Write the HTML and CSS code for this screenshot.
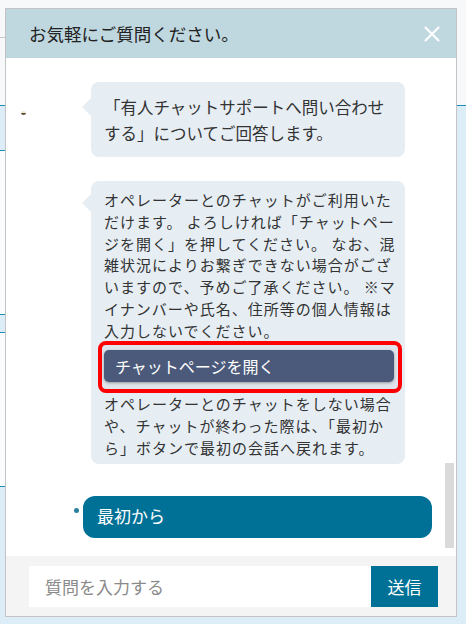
FILE: index.html
```html
<!DOCTYPE html>
<html lang="ja">
<head>
<meta charset="utf-8">
<title>チャット</title>
<link rel="stylesheet" href="styles.css">
</head>
<body>
<div class="panel">
  <header class="panel-head">
    <h1 class="panel-title">お気軽にご質問ください。</h1>
    <button class="close-btn" aria-label="閉じる">
      <svg width="16" height="16" viewBox="0 0 16 16"><path d="M1 1 L15 15 M15 1 L1 15" stroke="#fff" stroke-width="2.2" fill="none"/></svg>
    </button>
  </header>
  <div class="panel-body">
    <div class="log">
      <div class="msg-row">
        <span class="avatar"></span>
        <div class="bubble bubble-intro">「有人チャットサポートへ問い合わせ<br>する」についてご回答します。</div>
      </div>
      <div class="msg-row">
        <span class="avatar avatar-none"></span>
        <div class="bubble bubble-long">
          <p class="bubble-text">オペレーターとのチャットがご利用いた<br>だけます。 よろしければ「チャットペー<br>ジを開く」を押してください。 なお、混<br>雑状況によりお繋ぎできない場合がござ<br>いますので、予めご了承ください。 ※マ<br>イナンバーや氏名、住所等の個人情報は<br>入力しないでください。</p>
          <div class="highlight">
            <button class="open-btn">チャットページを開く</button>
          </div>
          <p class="bubble-text">オペレーターとのチャットをしない場合<br>や、チャットが終わった際は、「最初か<br>ら」ボタンで最初の会話へ戻れます。</p>
        </div>
      </div>
      <div class="user-row">
        <span class="user-dot"></span>
        <div class="user-btn">最初から</div>
      </div>
    </div>
    <div class="scroll-track"><div class="scroll-thumb"></div></div>
  </div>
  <footer class="panel-foot">
    <div class="input">質問を入力する</div>
    <button class="send-btn">送信</button>
  </footer>
</div>
</body>
</html>
```
FILE: styles.css
```css
* { box-sizing: border-box; }
html, body { height: 100%; }
body {
  margin: 0;
  padding: 8px 9px 7px 5px;
  font-family: "Noto Sans CJK JP", "Noto Sans", sans-serif;
  color: #333;
  background:
    linear-gradient(to bottom,
      transparent 37px, #c8c8c8 37px, #c8c8c8 38px, transparent 38px,
      transparent 150px, #1a8fb3 150px, #1a8fb3 151px, #fbfcfd 151px,
      #fbfcfd 314px, #1a8fb3 314px, #1a8fb3 315px, #dcedf8 315px,
      #dcedf8 332px, #1a8fb3 332px, #1a8fb3 333px, #fbfcfd 333px,
      #fbfcfd 486px, #1a8fb3 486px, #1a8fb3 487px, transparent 487px) left top / 5px 100% no-repeat,
    linear-gradient(to bottom, #f7f8fa 105px, #1a8fb3 105px, #1a8fb3 106px, #dcedf8 106px);
}
.panel {
  width: 452px;
  height: 609px;
  border: 1px solid #c3c3c3;
  display: flex;
  flex-direction: column;
  background: #fff;
}
.panel-head {
  height: 49px;
  flex: none;
  background: #bfd7df;
  display: flex;
  align-items: center;
  justify-content: space-between;
  padding: 0 16px 0 23px;
}
.panel-title {
  margin: 0;
  font-size: 17.5px;
  font-weight: normal;
  color: #222;
}
.close-btn {
  border: 0;
  padding: 0;
  background: none;
  width: 16px;
  height: 16px;
  display: flex;
  margin-top: 1px;
}
.panel-body {
  flex: 1;
  display: flex;
  overflow: hidden;
  background: #fff;
}
.log {
  flex: 1;
  padding: 24px 0 0 15px;
}
.msg-row {
  display: flex;
  align-items: flex-start;
  margin-bottom: 24px;
}
.avatar {
  flex: none;
  width: 5px;
  height: 4px;
  margin: 29px 65px 0 0;
  border-radius: 50%;
  background: linear-gradient(to bottom, #efe6cf 50%, #5a5040 50%);
}
.avatar-none { background: none; }
.bubble {
  position: relative;
  width: 314px;
  background: #e6eef4;
  border-radius: 8px;
  white-space: nowrap;
}
.bubble::before {
  content: "";
  position: absolute;
  left: -9px;
  top: 16px;
  border-style: solid;
  border-width: 9px 9px 9px 0;
  border-color: transparent #e6eef4 transparent transparent;
}
.bubble-intro {
  font-size: 16.5px;
  line-height: 26px;
  padding: 12px 13px 11px;
}
.bubble-long {
  padding: 8px 13px 5px;
  font-size: 15px;
  letter-spacing: 1px;
  line-height: 21.75px;
}
.bubble-long::before { top: 13px; }
.bubble-text { margin: 0; }
.highlight {
  margin: 0 -10px 0 -6px;
  border: 4px solid #ff0000;
  border-radius: 8px;
  padding: 5px 4px 7px 2px;
  background: #dfe5eb;
}
.open-btn {
  display: block;
  width: 100%;
  height: 32px;
  border: 0;
  border-radius: 5px;
  background: #4b5a7a;
  color: #fff;
  font-family: inherit;
  font-size: 16px;
  text-align: left;
  padding: 0 11px;
  box-shadow: 0 1px 3px rgba(0,0,0,0.35);
}
.user-row {
  display: flex;
  align-items: flex-start;
  margin-top: 32px;
  padding-left: 53px;
}
.user-dot {
  flex: none;
  width: 5px;
  height: 5px;
  border-radius: 50%;
  background: #2a7fa0;
  margin: 12px 4px 0 0;
}
.user-btn {
  width: 349px;
  height: 42px;
  border-radius: 12px;
  background: #007196;
  color: #fff;
  font-size: 17px;
  line-height: 40px;
  padding-left: 14px;
}
.scroll-track {
  flex: none;
  width: 9px;
  margin-right: 2px;
  display: flex;
  flex-direction: column;
  justify-content: flex-end;
  padding-bottom: 8px;
}
.scroll-thumb {
  height: 85px;
  background: #dadada;
}
.panel-foot {
  flex: none;
  height: 60px;
  background: #f4f4f4;
  display: flex;
  padding: 10px 18px 9px 23px;
}
.input {
  flex: 1;
  background: #fff;
  color: #8a8a8a;
  font-size: 17px;
  line-height: 41px;
  padding-left: 16px;
}
.send-btn {
  width: 67px;
  border: 0;
  background: #007196;
  color: #fff;
  font-family: inherit;
  font-size: 17px;
  padding: 0;
}
```
